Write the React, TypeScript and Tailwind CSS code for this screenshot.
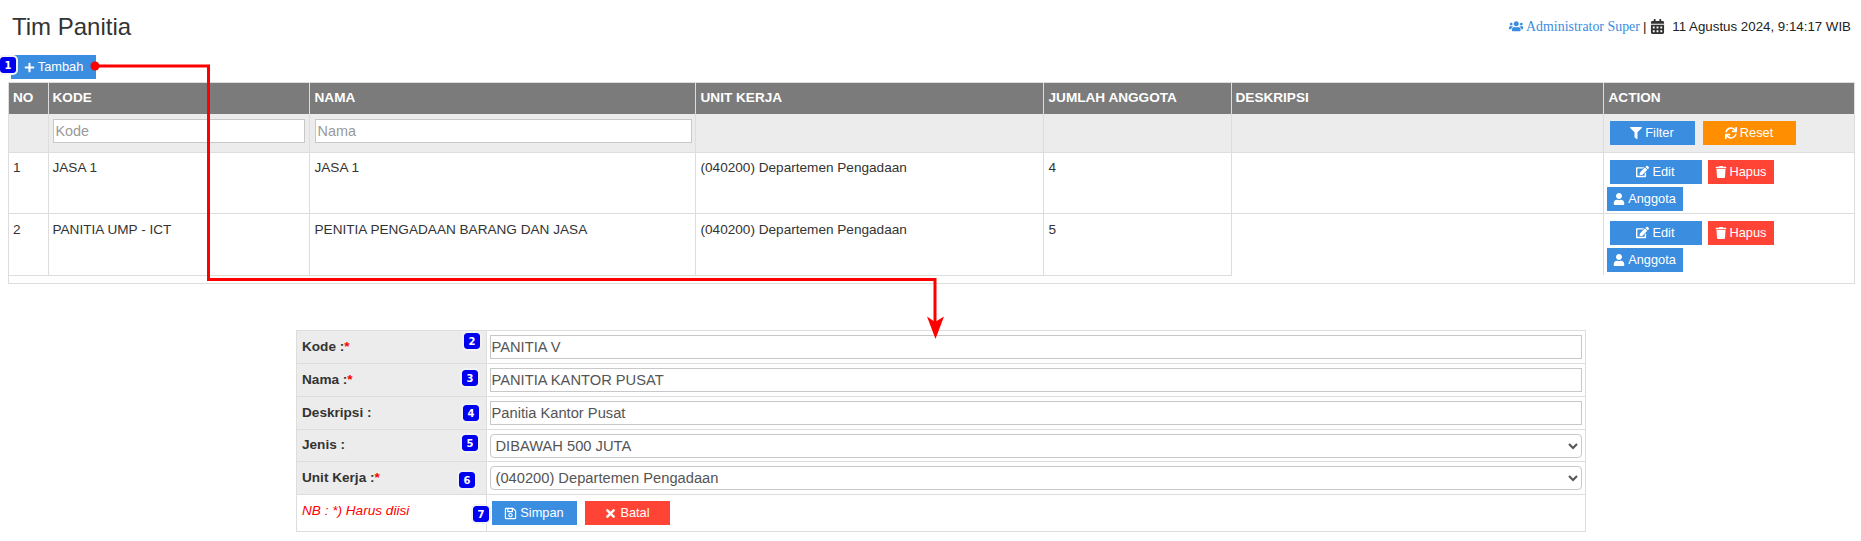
import { FaCalendarAlt, FaEdit, FaFilter, FaPlus, FaRegSave, FaSync, FaTimes, FaTrash, FaUser, FaUsers } from 'react-icons/fa';

const rows = [
  { no: '1', kode: 'JASA 1', nama: 'JASA 1', unit: '(040200) Departemen Pengadaan', jumlah: '4' },
  { no: '2', kode: 'PANITIA UMP - ICT', nama: 'PENITIA PENGADAAN BARANG DAN JASA', unit: '(040200) Departemen Pengadaan', jumlah: '5' },
];

const th = 'border-l border-[#ddd] bg-[#7b7b7b] pl-[5px] pr-1 pb-[1px] text-left align-middle font-bold text-white first:border-l-0';
const filterCell = 'border-l border-b border-[#ddd] bg-[#ececec] px-1 first:border-l-0';
const td = 'border-l border-b border-[#ddd] pl-[5px] pr-1 align-top first:border-l-0';
const btnBlue = 'flex h-6 items-center justify-center gap-[3px] bg-[#3a8ddf] text-[12.8px] text-white';
const btnRed = 'flex h-6 items-center justify-center gap-[3px] bg-[#ff4436] text-[12.8px] text-white';
const label = 'border-b border-r border-[#ddd] bg-[#ececec] pl-[5px] align-middle font-bold text-[#333]';
const field = 'border-b border-[#ddd] px-[3px] align-middle';
const input = 'block h-6 w-full border border-[#c8c8c8] bg-white px-[1px] text-[14.7px] text-[#555] outline-none';
const select = 'block h-6 w-full rounded-[4px] border border-[#c8c8c8] bg-white pl-[1px] text-[14.7px] text-[#555] outline-none';

function Star() {
  return <span className="text-[#f00]">*</span>;
}

function Badge({ n, className }: { n: string; className: string }) {
  return (
    <span
      className={`absolute flex h-4 w-4 items-center justify-center rounded-[3px] bg-[#0000f0] text-[10px] font-bold text-white outline-2 outline-[#f2f2f2] ${className}`}
      style={{ fontFamily: '"DejaVu Sans", sans-serif' }}
    >
      {n}
    </span>
  );
}

function RowActions() {
  return (
    <div className="flex flex-col gap-[3px]">
      <div className="ml-[3px] flex gap-[6px]">
        <button className={`${btnBlue} w-[92px]`}><FaEdit className="text-[13px]" /> Edit</button>
        <button className={`${btnRed} w-[66px]`}><FaTrash className="text-[12px]" /> Hapus</button>
      </div>
      <button className={`${btnBlue} w-[76px]`}><FaUser className="text-[12px]" /> Anggota</button>
    </div>
  );
}

function DataRow({ row, last }: { row: (typeof rows)[number]; last: boolean }) {
  const top = last ? 'pt-[6px]' : 'pt-[5px]';
  return (
    <tr className={last ? 'h-[62px]' : 'h-[61px]'}>
      <td className={`${td} ${top} !pl-1`}>{row.no}</td>
      <td className={`${td} ${top} !pl-1`}>{row.kode}</td>
      <td className={`${td} ${top}`}>{row.nama}</td>
      <td className={`${td} ${top}`}>{row.unit}</td>
      <td className={`${td} ${top}`}>{row.jumlah}</td>
      <td className={`${td} ${last ? 'border-b-0' : ''}`} />
      <td className={`${td} !pl-[3px] pt-[7px] ${last ? 'border-b-0' : ''}`}><RowActions /></td>
    </tr>
  );
}

export default function App() {
  return (
    <div className="relative h-[541px] overflow-hidden bg-white text-[13.6px] text-[#333]" style={{ fontFamily: '"Liberation Sans", Arial, sans-serif' }}>
      <header className="flex h-[55px] items-center justify-between pb-[2px] pl-3 pr-[10px]">
        <h1 className="text-[24px] leading-none text-[#333]">Tim Panitia</h1>
        <div className="flex items-center text-[13.3px] text-[#222]">
          <FaUsers className="mr-[3px] text-[14.5px] text-[#3a8ddf]" />
          <span className="pt-px text-[13.9px] text-[#3a8ddf]" style={{ fontFamily: '"Liberation Serif", serif' }}>Administrator Super</span>
          <span className="ml-[3px] mr-[4px]">|</span>
          <FaCalendarAlt className="mr-[7px] text-[15px] text-[#333]" />
          <span>11 Agustus 2024, 9:14:17 WIB</span>
        </div>
      </header>

      <button className={`${btnBlue} ml-[11px] w-[85px]`}><FaPlus className="text-[11px]" /> Tambah</button>

      <div className="ml-2 mr-[6px] mt-[3px] border border-[#ddd] pb-[7px]">
        <table className="w-full table-fixed border-collapse">
          <colgroup>
            <col className="w-[39px]" />
            <col className="w-[261px]" />
            <col className="w-[386px]" />
            <col className="w-[348px]" />
            <col className="w-[188px]" />
            <col className="w-[372px]" />
            <col />
          </colgroup>
          <thead>
            <tr className="h-[31px]">
              <th className={`${th} !pl-1`}>NO</th>
              <th className={`${th} !pl-1`}>KODE</th>
              <th className={th}>NAMA</th>
              <th className={th}>UNIT KERJA</th>
              <th className={th}>JUMLAH ANGGOTA</th>
              <th className={`${th} !pl-1`}>DESKRIPSI</th>
              <th className={th}>ACTION</th>
            </tr>
            <tr className="h-[38px]">
              <td className={filterCell} />
              <td className={filterCell}>
                <input readOnly placeholder="Kode" className="mb-[4px] block h-6 w-full border border-[#c8c8c8] bg-white px-[2px] text-[14.4px] outline-none placeholder:text-[#999]" />
              </td>
              <td className={`${filterCell} !pl-[5px] !pr-[3px]`}>
                <input readOnly placeholder="Nama" className="mb-[4px] block h-6 w-full border border-[#c8c8c8] bg-white px-[2px] text-[14.4px] outline-none placeholder:text-[#999]" />
              </td>
              <td className={filterCell} />
              <td className={filterCell} />
              <td className={filterCell} />
              <td className={filterCell}>
                <div className="ml-[2px] flex gap-2">
                  <button className={`${btnBlue} w-[85px]`}><FaFilter className="text-[12px]" /> Filter</button>
                  <button className="flex h-6 w-[93px] items-center justify-center gap-[3px] bg-[#ff8f00] text-[12.8px] text-white"><FaSync className="text-[12px]" /> Reset</button>
                </div>
              </td>
            </tr>
          </thead>
          <tbody>
            <DataRow row={rows[0]} last={false} />
            <DataRow row={rows[1]} last />
          </tbody>
        </table>
      </div>

      <div className="ml-[296px] mt-[46px] w-[1290px] border border-b-0 border-[#ddd]">
        <table className="w-full table-fixed border-collapse">
          <colgroup>
            <col className="w-[189px]" />
            <col />
          </colgroup>
          <tbody>
            <tr className="h-[33px]">
              <td className={label}>Kode :<Star /></td>
              <td className={field}><input readOnly value="PANITIA V" className={input} /></td>
            </tr>
            <tr className="h-[33px]">
              <td className={label}>Nama :<Star /></td>
              <td className={field}><input readOnly value="PANITIA KANTOR PUSAT" className={input} /></td>
            </tr>
            <tr className="h-[33px]">
              <td className={label}>Deskripsi :</td>
              <td className={field}><input readOnly value="Panitia Kantor Pusat" className={input} /></td>
            </tr>
            <tr className="h-[32px]">
              <td className={label}>Jenis :</td>
              <td className={field}>
                <select className={select} defaultValue="a"><option value="a">DIBAWAH 500 JUTA</option></select>
              </td>
            </tr>
            <tr className="h-[33px]">
              <td className={label}>Unit Kerja :<Star /></td>
              <td className={field}>
                <select className={select} defaultValue="a"><option value="a">(040200) Departemen Pengadaan</option></select>
              </td>
            </tr>
            <tr className="h-[37px]">
              <td className="border-b border-r border-[#ddd] pb-[4px] pl-[5px] italic text-[#f00]">NB : *) Harus diisi</td>
              <td className={`${field} !px-[5px]`}>
                <div className="flex gap-2">
                  <button className={`${btnBlue} w-[85px]`}><FaRegSave className="text-[13px]" /> Simpan</button>
                  <button className={`${btnRed} w-[85px]`}><FaTimes className="text-[13px]" /> Batal</button>
                </div>
              </td>
            </tr>
          </tbody>
        </table>
      </div>

      <Badge n="1" className="left-0 top-[57px]" />
      <Badge n="2" className="left-[464px] top-[333px]" />
      <Badge n="3" className="left-[462px] top-[370px]" />
      <Badge n="4" className="left-[463px] top-[405px]" />
      <Badge n="5" className="left-[462px] top-[435px]" />
      <Badge n="6" className="left-[459px] top-[472px]" />
      <Badge n="7" className="left-[473px] top-[506px]" />

      <svg className="pointer-events-none absolute left-0 top-0" width="1861" height="541" fill="none">
        <circle cx="95" cy="66" r="4.5" fill="#f00" />
        <path d="M95 66H208.5V279.5H935V322" stroke="#f00" strokeWidth="3" />
        <path d="M927 316.5L935 322L944 316.5L935.5 339Z" fill="#f00" />
      </svg>
    </div>
  );
}
